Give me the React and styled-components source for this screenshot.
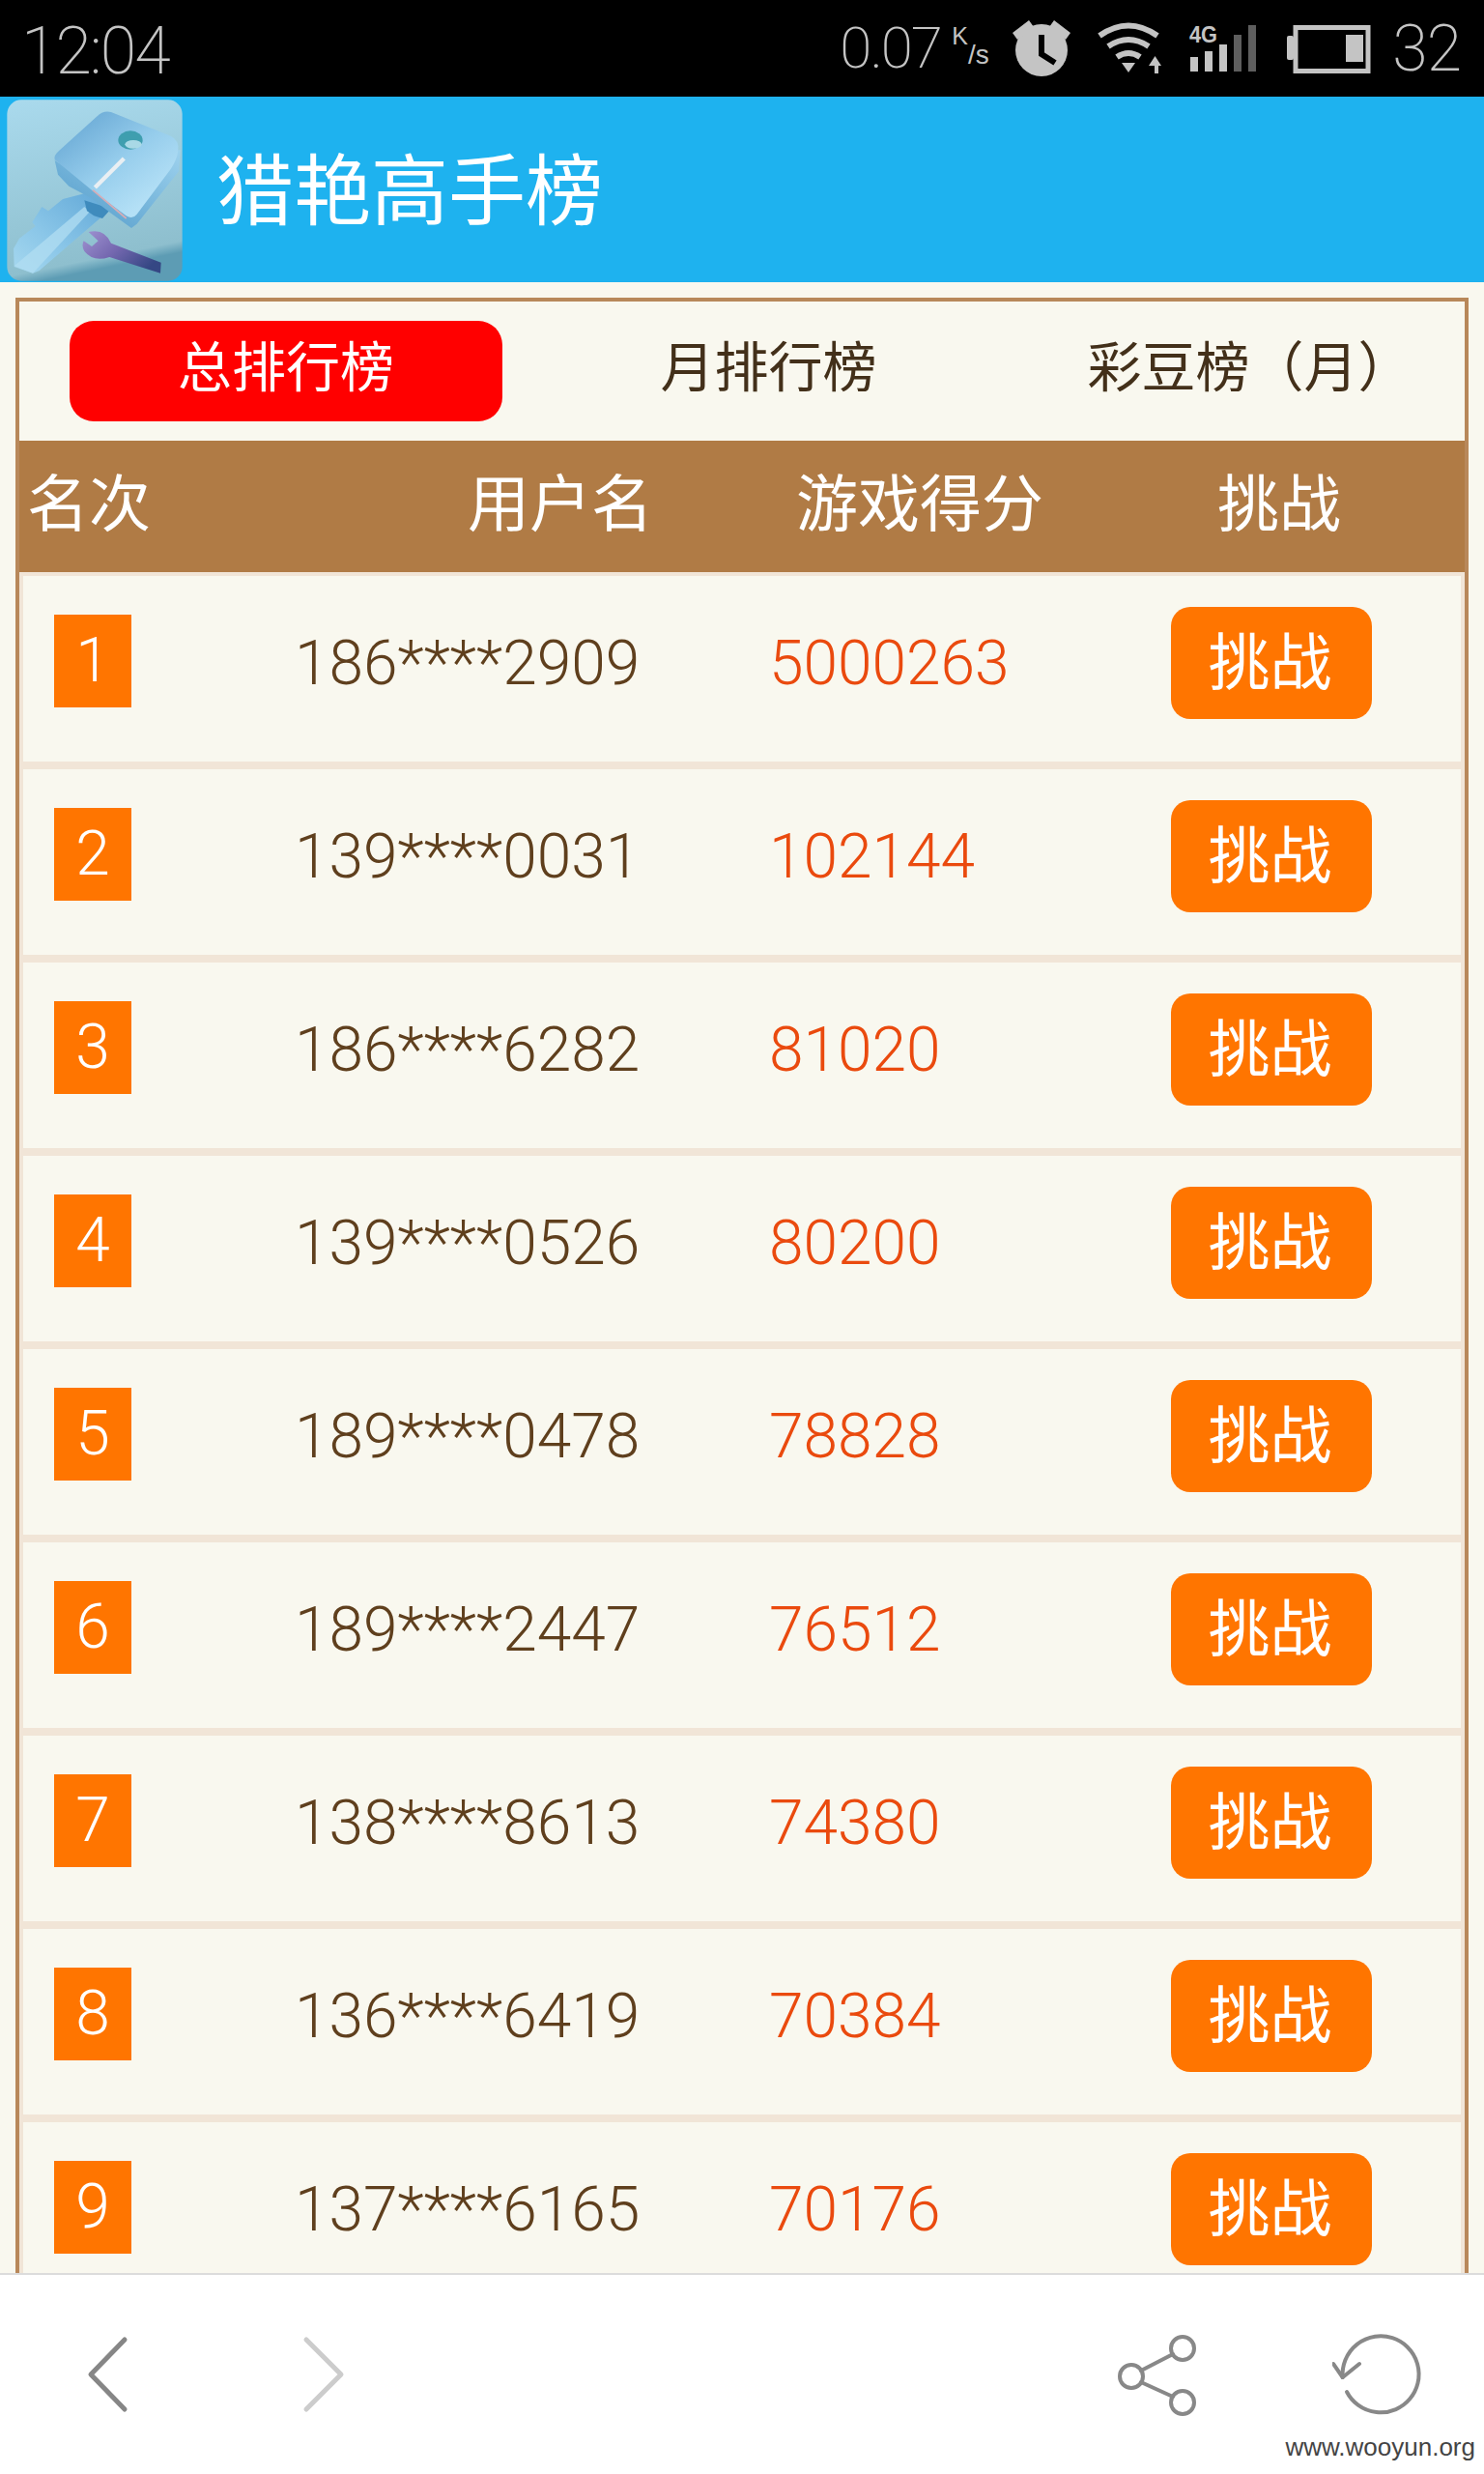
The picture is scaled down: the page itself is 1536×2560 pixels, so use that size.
import styled, { createGlobalStyle } from 'styled-components'

const rows = [
  { rank: 1, user: '186****2909', score: '5000263' },
  { rank: 2, user: '139****0031', score: '102144' },
  { rank: 3, user: '186****6282', score: '81020' },
  { rank: 4, user: '139****0526', score: '80200' },
  { rank: 5, user: '189****0478', score: '78828' },
  { rank: 6, user: '189****2447', score: '76512' },
  { rank: 7, user: '138****8613', score: '74380' },
  { rank: 8, user: '136****6419', score: '70384' },
  { rank: 9, user: '137****6165', score: '70176' },
]

const GlobalStyle = createGlobalStyle`
  html, body {
    margin: 0;
    padding: 0;
    background: #f9f8ef;
  }
  * {
    box-sizing: border-box;
  }
`

const Page = styled.div`
  width: 1536px;
  height: 2560px;
  display: flex;
  flex-direction: column;
  position: relative;
  overflow: hidden;
  background: #f9f8ef;
  font-family: Roboto, "Noto Sans CJK SC", sans-serif;
  font-weight: 300;
`

const StatusBar = styled.div`
  flex: none;
  height: 100px;
  background: #000;
  color: #c4c4c4;
  display: flex;
  align-items: center;
  justify-content: space-between;
  padding: 0 24px 0 22px;
`

const Clock = styled.span`
  font-size: 68px;
  font-weight: 200;
  letter-spacing: -2px;
  line-height: 100px;
  padding-top: 5px;
`

const StatusRight = styled.div`
  display: flex;
  align-items: center;
`

const Speed = styled.span`
  font-size: 60px;
  font-weight: 200;
  letter-spacing: -2px;
  width: 116px;
  margin-top: -2px;
`

const SpeedUnit = styled.span`
  font-family: "Liberation Sans", sans-serif;
  font-size: 25px;
  font-weight: 400;
  width: 63px;
  display: flex;
  align-items: flex-start;
  height: 50px;
  transform: translateY(-2px);
  sub {
    font-size: 28px;
    line-height: 28px;
    vertical-align: baseline;
    margin-top: 20px;
  }
`

const Level = styled.span`
  font-size: 66px;
  font-weight: 200;
  letter-spacing: -1px;
  margin-left: 21px;
`

const StatusIcons = styled.svg`
  display: block;
  flex: none;
`

const AppBar = styled.div`
  flex: none;
  height: 192px;
  background: #1eb2ef;
  display: flex;
  align-items: center;
  color: #fff;
`

const Logo = styled.svg`
  flex: none;
  display: block;
  filter: blur(0.7px);
`

const Title = styled.h1`
  margin: 6px 0 0 24px;
  font-size: 80px;
  font-weight: 400;
  line-height: 1;
`

const Content = styled.main`
  flex: 1;
  min-height: 0;
  overflow: hidden;
  padding: 16px 16px 0;
`

const Frame = styled.section`
  border: 4px solid #b8885a;
`

const Tabs = styled.div`
  height: 144px;
  display: grid;
  grid-template-columns: 52px 448px 551px 1fr;
  padding-top: 20px;
  color: #43301a;
`

const Tab = styled.div`
  grid-column: ${({ $col }) => $col};
  height: 104px;
  border-radius: 25px;
  font-size: 56px;
  line-height: 98px;
  font-weight: 400;
  text-align: center;
  white-space: nowrap;
  color: ${({ $active }) => ($active ? '#fff' : 'inherit')};
  background: ${({ $active }) => ($active ? '#f00' : 'transparent')};
`

const TableHead = styled.div`
  height: 136px;
  background: #b07b45;
  color: #fff;
  font-size: 64px;
  font-weight: 400;
  line-height: 134px;
  display: grid;
  grid-template-columns: 456px 340px 436px 1fr;
  padding-left: 8px;
  white-space: nowrap;
`

const Row = styled.div`
  height: 200px;
  border: 4px solid #f1e5d7;
  display: grid;
  grid-template-columns: 249px 491px 416px 208px;
  padding-left: 32px;
`

const Rank = styled.div`
  width: 80px;
  height: 96px;
  margin-top: 40px;
  background: #ff7500;
  color: #fff;
  font-size: 64px;
  line-height: 96px;
  text-align: center;
`

const UserName = styled.div`
  font-size: 64px;
  line-height: 182px;
  color: #5f3f1d;
  white-space: nowrap;
`

const Score = styled.div`
  font-size: 64px;
  line-height: 182px;
  color: #ea4a0e;
`

const ChallengeButton = styled.button`
  width: 208px;
  height: 116px;
  margin-top: 32px;
  padding: 0 3px 0 0;
  border: none;
  border-radius: 20px;
  background: #ff7500;
  color: #fff;
  font-family: inherit;
  font-size: 64px;
  font-weight: 400;
  line-height: 118px;
`

const BottomBar = styled.nav`
  flex: none;
  height: 208px;
  background: #fff;
  border-top: 2px solid #dcdcdc;
  display: flex;
  align-items: center;
  justify-content: space-between;
  padding: 0 57px 0 61px;
`

const NavGroup = styled.div`
  display: flex;
  gap: ${({ $gap }) => $gap}px;
`

const NavIcon = styled.svg`
  display: block;
  width: 100px;
  height: 100px;
  fill: none;
  stroke: ${({ $stroke }) => $stroke};
  stroke-linecap: round;
  stroke-linejoin: round;
`

const Watermark = styled.span`
  position: absolute;
  right: 9px;
  bottom: 13px;
  font-family: "Liberation Sans", sans-serif;
  font-size: 26px;
  font-weight: 400;
  line-height: 30px;
  color: #444;
`

function AppLogo() {
  return (
    <Logo width="200" height="192" viewBox="0 30 600 576">
      <defs>
        <linearGradient id="logoBg" x1="0" y1="0" x2="0.2" y2="1">
          <stop offset="0" stopColor="#aadaed" />
          <stop offset="0.94" stopColor="#8ebfce" />
          <stop offset="1" stopColor="#5d9cb4" />
        </linearGradient>
        <linearGradient id="keyFace" x1="0.1" y1="0.1" x2="0.75" y2="0.85">
          <stop offset="0" stopColor="#69a9d5" />
          <stop offset="0.55" stopColor="#96cdec" />
          <stop offset="1" stopColor="#b4e0f6" />
        </linearGradient>
        <linearGradient id="keySide" x1="1" y1="0" x2="0" y2="1">
          <stop offset="0" stopColor="#9ed2ee" />
          <stop offset="1" stopColor="#4f99c8" />
        </linearGradient>
        <linearGradient id="keyBlade" x1="1" y1="0" x2="0" y2="1">
          <stop offset="0" stopColor="#5fa6d6" />
          <stop offset="0.6" stopColor="#8ac6e8" />
          <stop offset="1" stopColor="#a6d8ef" />
        </linearGradient>
        <linearGradient id="wrench" x1="0" y1="0" x2="1" y2="0.6">
          <stop offset="0" stopColor="#a094d2" />
          <stop offset="0.5" stopColor="#7568b0" />
          <stop offset="1" stopColor="#354784" />
        </linearGradient>
      </defs>
      <rect x="22" y="40" width="544" height="562" rx="44" fill="url(#logoBg)" />
      <path d="M195 348 L150 385 L130 372 L100 420 L110 432 L60 470 L42 502 L44 558 L102 578 L122 570 L345 378 L285 325 Z" fill="url(#keyBlade)" />
      <path d="M44 556 L262 372 L278 388 L102 578 Z" fill="#b2def2" opacity="0.75" />
      <path d="M262 352 L345 378 L318 408 L292 400 L270 385 Z" fill="#3f8bbd" />
      <path d="M170 228 L180 272 L214 308 L283 345 L345 392 L408 438 L425 425 L555 262 L560 195 L400 230 L285 300 Z" fill="url(#keySide)" />
      <path d="M170 226 Q166 212 184 197 L300 92 Q320 72 345 78 L530 152 Q558 166 553 198 Q550 225 530 255 L425 395 Q412 412 392 400 L285 320 Z" fill="url(#keyFace)" />
      <ellipse cx="405" cy="165" rx="38" ry="29" fill="#3f9eaf" />
      <ellipse cx="414" cy="178" rx="26" ry="13" fill="#a9d9e6" />
      <path d="M295 312 L385 222" stroke="#e9eff3" strokeWidth="13" />
      <path d="M288 320 L392 408" stroke="#d6acb6" strokeWidth="5" />
      <path d="M275 450 Q325 438 345 485 L500 545 L498 578 L340 528 Q290 545 262 510 Q252 492 260 478 L285 495 L305 478 Z" fill="url(#wrench)" />
    </Logo>
  )
}

function StatusGlyphs() {
  return (
    <StatusIcons width="284" height="100" viewBox="0 0 284 100" fill="#c4c4c4">
      {/* alarm clock */}
      <circle cx="30" cy="52" r="27" />
      <path d="M0 34 L17 21 L22 28 L5 41 Z M60 34 L43 21 L38 28 L55 41 Z" />
      <path d="M30 36 L30 56 L44 65" fill="none" stroke="#000" strokeWidth="6" />
      {/* wifi */}
      <g fill="none" stroke="#c4c4c4" strokeWidth="6">
        <path d="M90 37 Q120 16 150 37" />
        <path d="M99 48 Q120 34 141 48" />
        <path d="M108 59 Q120 51 132 59" />
      </g>
      <path d="M113 65 L127 65 L120 75 Z" />
      <path d="M144 64 L151 64 L151 76 L147 76 L147 68 L141 68 L147.5 58 L154 68 L144 68 Z" />
      {/* 4G and signal */}
      <text x="183" y="44" fontFamily="'Liberation Sans', sans-serif" fontWeight="700" fontSize="24" textLength="29" lengthAdjust="spacingAndGlyphs">4G</text>
      <rect x="184" y="59" width="8" height="15" />
      <rect x="199" y="53" width="8" height="21" />
      <rect x="214" y="46" width="8" height="28" />
      <rect x="229" y="36" width="8" height="38" fill="#5e5e5e" />
      <rect x="244" y="26" width="8" height="48" fill="#5e5e5e" />
    </StatusIcons>
  )
}

function Battery() {
  return (
    <StatusIcons width="88" height="100" viewBox="0 0 88 100" fill="#c4c4c4">
      <rect x="0" y="37" width="7" height="25" rx="2" />
      <rect x="9" y="28.5" width="75" height="45" fill="none" stroke="#c4c4c4" strokeWidth="5" />
      <rect x="61" y="36" width="18" height="28" />
    </StatusIcons>
  )
}

function App() {
  return (
    <Page>
      <GlobalStyle />
      <StatusBar>
        <Clock>12:04</Clock>
        <StatusRight>
          <Speed>0.07</Speed>
          <SpeedUnit>K<sub>/s</sub></SpeedUnit>
          <StatusGlyphs />
          <Battery />
          <Level>32</Level>
        </StatusRight>
      </StatusBar>
      <AppBar>
        <AppLogo />
        <Title>猎艳高手榜</Title>
      </AppBar>
      <Content>
        <Frame>
          <Tabs>
            <Tab $col={2} $active>总排行榜</Tab>
            <Tab $col={3}>月排行榜</Tab>
            <Tab $col={4}>彩豆榜（月）</Tab>
          </Tabs>
          <TableHead>
            <span>名次</span>
            <span>用户名</span>
            <span>游戏得分</span>
            <span>挑战</span>
          </TableHead>
          {rows.map((row) => (
            <Row key={row.rank}>
              <Rank>{row.rank}</Rank>
              <UserName>{row.user}</UserName>
              <Score>{row.score}</Score>
              <ChallengeButton>挑战</ChallengeButton>
            </Row>
          ))}
        </Frame>
      </Content>
      <BottomBar>
        <NavGroup $gap={124}>
          <NavIcon viewBox="0 0 100 100" $stroke="#868686" strokeWidth="5">
            <path d="M68 14 L33 50 L68 86" />
          </NavIcon>
          <NavIcon viewBox="0 0 100 100" $stroke="#cccccc" strokeWidth="5">
            <path d="M32 14 L68 50 L32 86" />
          </NavIcon>
        </NavGroup>
        <NavGroup $gap={131}>
          <NavIcon viewBox="0 0 100 100" $stroke="#888888" strokeWidth="4">
            <circle cx="76" cy="23" r="12" />
            <circle cx="23" cy="52" r="12" />
            <circle cx="76" cy="79" r="12" />
            <path d="M33 46 L66 29 M33 58 L66 73" />
          </NavIcon>
          <NavIcon viewBox="0 0 100 100" $stroke="#888888" strokeWidth="4">
            <path d="M15 68 A39.5 39.5 0 1 0 10.7 53" />
            <path d="M1 39 L10.7 53 L28 39" />
          </NavIcon>
        </NavGroup>
      </BottomBar>
      <Watermark>www.wooyun.org</Watermark>
    </Page>
  )
}

export default App
